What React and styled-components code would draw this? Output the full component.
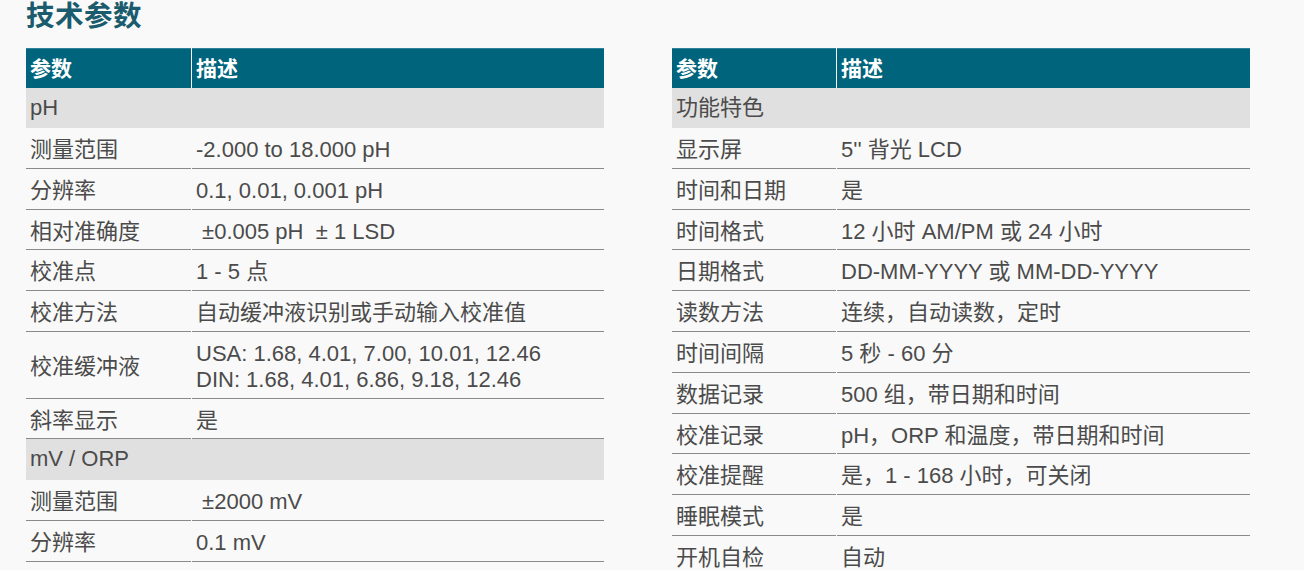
import React from "react";
import styled, { createGlobalStyle } from "styled-components";

const Global = createGlobalStyle`
  html, body { margin: 0; padding: 0; background: #f9f9f9; }
  body { font-family: "Liberation Sans", "Noto Sans CJK SC", sans-serif; }
`;

const Page = styled.div`
  padding: 0 0 0 26px;
  width: 1304px;
  height: 570px;
  overflow: hidden;
  box-sizing: border-box;
`;

const Title = styled.h1`
  margin: 0;
  height: 48px;
  font-size: 28.5px;
  line-height: 28px;
  font-weight: 700;
  color: #1a5c6d;
  font-family: "Noto Sans CJK SC", sans-serif;
  letter-spacing: 0.5px;
`;

const Tables = styled.div`
  display: flex;
  gap: 68px;
  align-items: flex-start;
`;

const Table = styled.div`
  width: 578px;
  display: grid;
  grid-template-columns: ${(p) => p.$first}px 1fr;
  column-gap: 1px;
  color: #4b4b4b;
`;

const Head = styled.div`
  background: #00647c;
  color: #ffffff;
  font-family: "Noto Sans CJK SC", sans-serif;
  font-weight: 700;
  font-size: 21px;
  height: 40px;
  line-height: 36px;
  padding: 0 4px;
  box-sizing: border-box;
  border-top: 1px solid #2d8199;
`;

const Section = styled.div`
  grid-column: 1 / -1;
  background: #e0e0e0;
  height: ${(p) => (p.$first ? 40 : 40.8)}px;
  line-height: 40px;
  padding: 0 4px;
  font-size: 22px;
  box-sizing: border-box;
`;

const Cell = styled.div`
  padding: 9px 4px 5px;
  line-height: 25.8px;
  font-size: 22px;
  border-bottom: 1px solid #8a8a8a;
  white-space: pre;
  display: flex;
  flex-direction: column;
  justify-content: center;
  font-family: "Liberation Sans", "Noto Sans CJK SC", sans-serif;
`;

const left = [
  { section: "pH" },
  ["测量范围", "-2.000 to 18.000 pH"],
  ["分辨率", "0.1, 0.01, 0.001 pH"],
  ["相对准确度", " ±0.005 pH  ± 1 LSD"],
  ["校准点", "1 - 5 点"],
  ["校准方法", "自动缓冲液识别或手动输入校准值"],
  ["校准缓冲液", ["USA: 1.68, 4.01, 7.00, 10.01, 12.46", "DIN: 1.68, 4.01, 6.86, 9.18, 12.46"]],
  ["斜率显示", "是"],
  { section: "mV / ORP" },
  ["测量范围", " ±2000 mV"],
  ["分辨率", "0.1 mV"],
];

const right = [
  { section: "功能特色" },
  ["显示屏", "5'' 背光 LCD"],
  ["时间和日期", "是"],
  ["时间格式", "12 小时 AM/PM 或 24 小时"],
  ["日期格式", "DD-MM-YYYY 或 MM-DD-YYYY"],
  ["读数方法", "连续，自动读数，定时"],
  ["时间间隔", "5 秒 - 60 分"],
  ["数据记录", "500 组，带日期和时间"],
  ["校准记录", "pH，ORP 和温度，带日期和时间"],
  ["校准提醒", "是，1 - 168 小时，可关闭"],
  ["睡眠模式", "是"],
  ["开机自检", "自动"],
];

function SpecTable({ rows, first }) {
  return (
    <Table $first={first}>
      <Head>参数</Head>
      <Head>描述</Head>
      {rows.map((r, i) =>
        r.section ? (
          <Section key={i} $first={i === 0}>{r.section}</Section>
        ) : (
          <React.Fragment key={i}>
            <Cell>{r[0]}</Cell>
            <Cell>
              {Array.isArray(r[1]) ? r[1].map((l) => <span key={l}>{l}</span>) : r[1]}
            </Cell>
          </React.Fragment>
        )
      )}
    </Table>
  );
}

export default function App() {
  return (
    <Page>
      <Global />
      <Title>技术参数</Title>
      <Tables>
        <SpecTable rows={left} first={165} />
        <SpecTable rows={right} first={164} />
      </Tables>
    </Page>
  );
}
